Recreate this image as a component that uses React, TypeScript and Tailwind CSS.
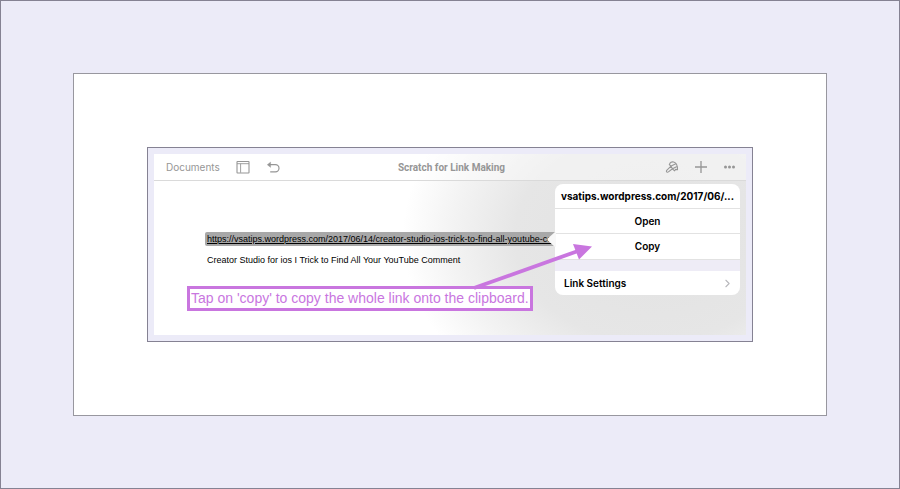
import { ChevronRight } from 'lucide-react';

const LINK = 'https://vsatips.wordpress.com/2017/06/14/creator-studio-ios-trick-to-find-all-youtube-co';

function SidebarIcon() {
  return (
    <svg width="14" height="14" viewBox="0 0 14 14" fill="none" stroke="currentColor" aria-hidden="true">
      <rect x="1" y="1.5" width="12" height="11.5" rx="0.5" strokeWidth="1.1" />
      <path d="M1 3.7h12M4.6 3.7v9" strokeWidth="0.9" />
    </svg>
  );
}

function UndoIcon() {
  return (
    <svg width="14" height="14" viewBox="0 0 14 14" fill="none" stroke="currentColor" strokeWidth="1.2" aria-hidden="true">
      <path d="M3 4.7h6.4a3.6 3.6 0 0 1 0 7.2H4.2" />
      <path d="M4.6 2L1.2 4.7l3.4 2.7z" fill="currentColor" strokeWidth="0.3" />
    </svg>
  );
}

function BrushIcon() {
  return (
    <svg width="14" height="14" viewBox="0 0 14 14" fill="none" stroke="currentColor" strokeWidth="1.1" strokeLinejoin="round" strokeLinecap="round" aria-hidden="true">
      <path d="M4.4 4.6C5 2.4 6.800 1.500 8.600 2c2.500.7 4 3.800 3.900 7.800l-1.900-.4-1 1.400-2.200-2" />
      <path d="M4.400 4.600l1.600 1.600M6.200 6l4.600-2.200M7.500 8.700l4-2" />
      <path d="M6 6.200L1.700 10.300c-.9 1.200.4 2.500 1.700 1.600l4.100-3.200z" />
    </svg>
  );
}

function PlusIcon() {
  return (
    <svg width="14" height="14" viewBox="0 0 14 14" stroke="currentColor" strokeWidth="1.3" aria-hidden="true">
      <path d="M7 1v12M1 7h12" />
    </svg>
  );
}

function MoreIcon() {
  return (
    <svg width="14" height="14" viewBox="0 0 14 14" fill="currentColor" aria-hidden="true">
      <circle cx="2.5" cy="7" r="1.5" />
      <circle cx="6.5" cy="7" r="1.5" />
      <circle cx="10.5" cy="7" r="1.5" />
    </svg>
  );
}

function Toolbar() {
  return (
    <header className="grid h-[27px] grid-cols-[1fr_auto_1fr] items-center border-b border-[#dadada] pr-[9px] pl-3 text-[#969696]">
      <div className="flex items-center">
        <button type="button" className="text-[10px]">Documents</button>
        <button type="button" aria-label="View options" className="ml-4"><SidebarIcon /></button>
        <button type="button" aria-label="Undo" className="ml-4"><UndoIcon /></button>
      </div>
      <h1 className="font-[Roboto,sans-serif] text-[10px] font-bold">Scratch for Link Making</h1>
      <div className="flex items-center justify-end gap-[15px]">
        <button type="button" aria-label="Format"><BrushIcon /></button>
        <button type="button" aria-label="Insert"><PlusIcon /></button>
        <button type="button" aria-label="More"><MoreIcon /></button>
      </div>
    </header>
  );
}

function LinkPopover() {
  return (
    <div className="absolute top-[30px] right-[6px] w-[185px] text-[10px] font-semibold text-black">
      <svg className="absolute top-[48px] -left-[8px]" width="9" height="15" viewBox="0 0 9 15" fill="#f8f8f8" aria-hidden="true">
        <path d="M9 0H8L1 6.3Q0 7.5 1 8.7L8 15h1z" />
      </svg>
      <div className="overflow-hidden rounded-lg bg-white">
        <h2 className="flex h-[25px] items-center justify-center border-b border-[#e2e2e2] text-[10px] font-bold">
          vsatips.wordpress.com/2017/06/...
        </h2>
        <button type="button" className="block h-[25px] w-full border-b border-[#e2e2e2]">Open</button>
        <button type="button" className="block h-[25px] w-full">Copy</button>
        <div className="h-3 border-t border-[#e2e2e2] bg-[#eeecf6]" />
        <button type="button" className="flex h-6 w-full items-center justify-between pr-[6px] pl-[9px]">
          Link Settings
          <ChevronRight size={13} strokeWidth={2} className="text-[#b8b8bc]" />
        </button>
      </div>
    </div>
  );
}

function Arrow() {
  return (
    <svg className="absolute top-[88px] left-[316px]" width="126" height="50" viewBox="0 0 126 50" aria-hidden="true">
      <path d="M4 46L108 9" stroke="#c976df" strokeWidth="3.8" />
      <path d="M122 4.5L103 2l6 15.5z" fill="#c976df" />
    </svg>
  );
}

export default function App() {
  return (
    <div className="border border-[#858293] bg-[#ecebf8] p-[72px] font-[Inter,'Liberation_Sans',sans-serif]">
      <div className="border border-[#98979f] bg-white p-[73px]">
        <div className="border border-[#858293] bg-[#ecebf8] p-[6px]">
          <div className="relative h-[181px] bg-[radial-gradient(ellipse_42%_105%_at_84%_46%,#e2e2e2_0%,#e6e6e6_55%,#f3f3f3_80%,#ffffff_100%)]">
            <div className="bg-white/45">
              <Toolbar />
            </div>
            <main className="pt-[51px] pl-[33px] font-['Liberation_Sans',Arial,sans-serif]">
              <div className="ml-[18px] w-[350px] rounded-l-xs bg-[#a8a8a8] pl-[2px] text-[9px] leading-[14px] whitespace-nowrap">
                <a href={LINK} className="text-black underline">{LINK}</a>
              </div>
              <p className="mt-[7px] ml-5 text-[9px] leading-[14px] text-black">
                Creator Studio for ios I Trick to Find All Your YouTube Comment
              </p>
              <p className="mt-[19px] w-fit border-3 border-[#c976df] bg-white px-px text-[14px] leading-[19px] whitespace-nowrap text-[#c976df]">
                Tap on 'copy' to copy the whole link onto the clipboard.
              </p>
            </main>
            <LinkPopover />
            <Arrow />
          </div>
        </div>
      </div>
    </div>
  );
}
